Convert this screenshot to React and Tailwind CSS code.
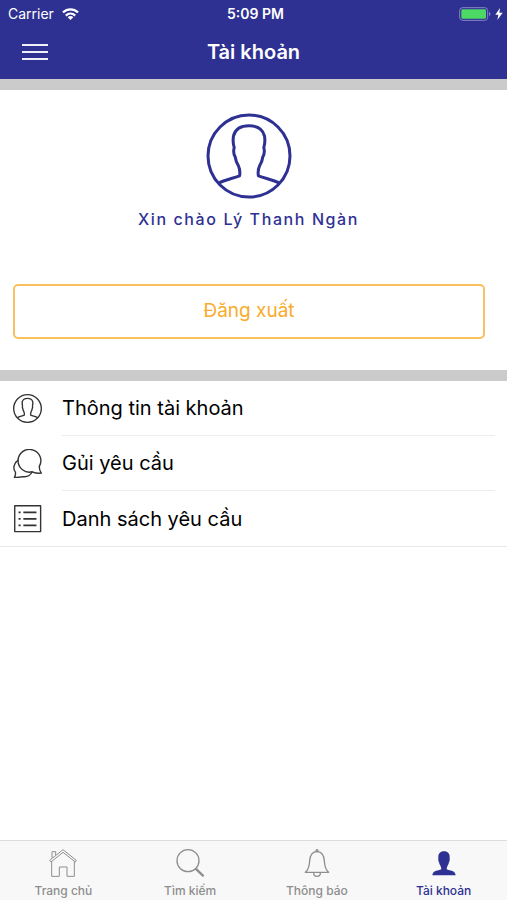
import React, { useState } from 'react';

const Svg = ({ size = 84, className, children, strokeWidth = 4 }) => (
  <svg
    viewBox={`0 0 ${size} ${size}`}
    className={className}
    fill="none"
    stroke="currentColor"
    strokeWidth={strokeWidth}
    strokeLinejoin="round"
    aria-hidden="true"
  >
    {children}
  </svg>
);

const ProfileIcon = ({ className, strokeWidth }) => (
  <Svg size={256} className={className} strokeWidth={strokeWidth}>
    <circle cx="128" cy="128" r="122" />
    <path d="M39 208 C55 200 79 195 100 187 C102 176 101 167 96 156 C90 146 88 139 87 131 C82 122 81 113 84 103 C80 90 80 79 82 68 C87 48 105 38 128 38 C151 38 169 48 174 68 C176 79 176 90 172 103 C175 113 174 122 169 131 C168 139 166 146 160 156 C155 167 154 176 156 187 C177 195 201 200 217 208" />
  </Svg>
);

const ChatIcon = ({ className }) => (
  <Svg className={className}>
    <path d="M76 51 A33 33 0 1 0 56 66 C64 70 72 71 82 70 C78 65 76 58 76 51 Z" />
    <path d="M15 32 C2 40 -1 57 7 67 C8 74 6 79 4 82 C13 83 20 82 28 80 C40 82 50 77 56 66" />
  </Svg>
);

const ListIcon = ({ className }) => (
  <Svg className={className}>
    <path d="M5 5 H80 V80 H5 Z" />
    <path d="M30 24 H68 M30 43 H68 M30 62 H68 M16 24 H22 M16 43 H22 M16 62 H22" strokeWidth="5" />
  </Svg>
);

const HomeIcon = ({ className }) => (
  <Svg className={className} strokeWidth={3}>
    <path d="M2 34 L42 2 L82 34 L79 39 L42 10 L6 39 Z M8 38 V82 H31 V54 H54 V82 H76 V38 M9 27 V8 H20 V18" />
  </Svg>
);

const SearchIcon = ({ className }) => (
  <Svg className={className}>
    <circle cx="36" cy="35" r="33" />
    <path d="M59 59 L83 82" strokeWidth="7" />
  </Svg>
);

const BellIcon = ({ className }) => (
  <Svg className={className}>
    <circle cx="42" cy="5" r="3" />
    <path d="M42 8 C26 8 21 21 20 36 C19 50 18 62 7 70 H77 C66 62 65 50 64 36 C63 21 58 8 42 8 Z M32 72 A10 10 0 0 0 52 72" />
  </Svg>
);

const UserIcon = ({ className }) => (
  <Svg className={className} strokeWidth={0}>
    <path
      fill="currentColor"
      d="M42 7 C30 7 25 15 25 23 C25 29 24 35 27 40 C28 48 34 51 34 61 C24 66 8 64 7 79 H77 C76 64 60 66 50 61 C50 51 56 48 57 40 C60 35 59 29 59 23 C59 15 54 7 42 7 Z"
    />
  </Svg>
);

const menuItems = [
  { id: 'info', label: 'Thông tin tài khoản', icon: <ProfileIcon className="size-[29px]" strokeWidth={12} /> },
  { id: 'send', label: 'Gủi yêu cầu', icon: <ChatIcon className="size-[29px]" /> },
  { id: 'list', label: 'Danh sách yêu cầu', icon: <ListIcon className="size-[29px]" /> },
];

const tabs = [
  { id: 'home', label: 'Trang chủ', Icon: HomeIcon },
  { id: 'search', label: 'Tìm kiếm', Icon: SearchIcon },
  { id: 'notice', label: 'Thông báo', Icon: BellIcon },
  { id: 'account', label: 'Tài khoản', Icon: UserIcon },
];

const StatusBar = () => (
  <div className="grid h-7 grid-cols-3 items-center pl-2 pr-1 text-sm">
    <div className="flex items-center gap-2">
      <span>Carrier</span>
      <svg viewBox="0 0 54 38" className="h-3 w-[17px]" fill="none" stroke="currentColor" strokeWidth="7" aria-hidden="true">
        <path d="M3 14 C17 1 37 1 51 14 M12 24 C21 16 33 16 42 24" />
        <path d="M18 29 C23 24 31 24 36 29 L27 38 Z" fill="currentColor" stroke="none" />
      </svg>
    </div>
    <div className="text-center font-semibold">5:09 PM</div>
    <div className="flex items-center justify-end gap-1">
      <svg viewBox="0 0 96 42" className="h-3.5 w-8" aria-hidden="true">
        <rect x="2" y="2" width="84" height="38" rx="9" fill="none" stroke="#8587c2" strokeWidth="3" />
        <rect x="7" y="7" width="74" height="28" rx="4" fill="#4cd964" />
        <path d="M90 15 C96 17 96 25 90 27 Z" fill="#8587c2" />
      </svg>
      <svg viewBox="0 0 22 36" className="h-3 w-2" fill="currentColor" aria-hidden="true">
        <path d="M14 0 L0 20 H9 L6 36 L22 14 H12 Z" />
      </svg>
    </div>
  </div>
);

const App = () => {
  const [activeTab, setActiveTab] = useState('account');

  return (
    <div className="flex min-h-screen flex-col bg-white font-['Inter',sans-serif] text-black">
      <header className="bg-[#2e3192] pb-[3px] text-white">
        <StatusBar />
        <div className="grid h-12 grid-cols-[48px_1fr_48px] items-center">
          <button type="button" aria-label="Menu" className="flex flex-col gap-[5px] pl-[22px]">
            <span className="h-[2px] w-[26px] bg-[#f0f0fa]" />
            <span className="h-[2px] w-[26px] bg-[#f0f0fa]" />
            <span className="h-[2px] w-[26px] bg-[#f0f0fa]" />
          </button>
          <h1 className="text-center text-xl font-semibold">Tài khoản</h1>
        </div>
      </header>

      <main className="flex-1">
        <section className="flex flex-col border-y-[11px] border-[#cbcbcb] px-3 pb-[31px] pt-[23px]">
          <div className="flex flex-col items-center pr-[10px] text-[#2e3192]">
            <ProfileIcon className="size-[86px]" strokeWidth={9} />
            <p className="mt-2 text-base font-medium leading-6 tracking-widest">Xin chào Lý Thanh Ngàn</p>
          </div>
          <div className="mt-[53px] pl-px pr-[10px]">
            <button
              type="button"
              className="h-[55px] w-full rounded-[5px] border-2 border-[#f9c05f] text-[19px] text-[#f9ab2b]"
            >
              Đăng xuất
            </button>
          </div>
        </section>

        <ul className="border-b border-[#e8e8e8]">
          {menuItems.map((item, index) => (
            <li key={item.id}>
              <button type="button" className="flex w-full items-center gap-5 pl-[13px] pr-3 text-left text-xl">
                <span className="text-[#333333]">{item.icon}</span>
                <span
                  className={`flex h-[55px] flex-1 items-center ${index < menuItems.length - 1 ? 'border-b border-[#ececec]' : ''}`}
                >
                  {item.label}
                </span>
              </button>
            </li>
          ))}
        </ul>
      </main>

      <nav className="grid h-[60px] grid-cols-4 border-t border-[#dcdcdc] bg-[#f8f8f8]">
        {tabs.map(({ id, label, Icon }) => (
          <button
            key={id}
            type="button"
            onClick={() => setActiveTab(id)}
            className={`flex flex-col items-center gap-1 pt-2 text-xs font-medium leading-5 ${activeTab === id ? 'text-[#2e3192]' : 'text-[#8e8e8e]'}`}
          >
            <Icon className="size-7 shrink-0" />
            {label}
          </button>
        ))}
      </nav>
    </div>
  );
};

export default App;
